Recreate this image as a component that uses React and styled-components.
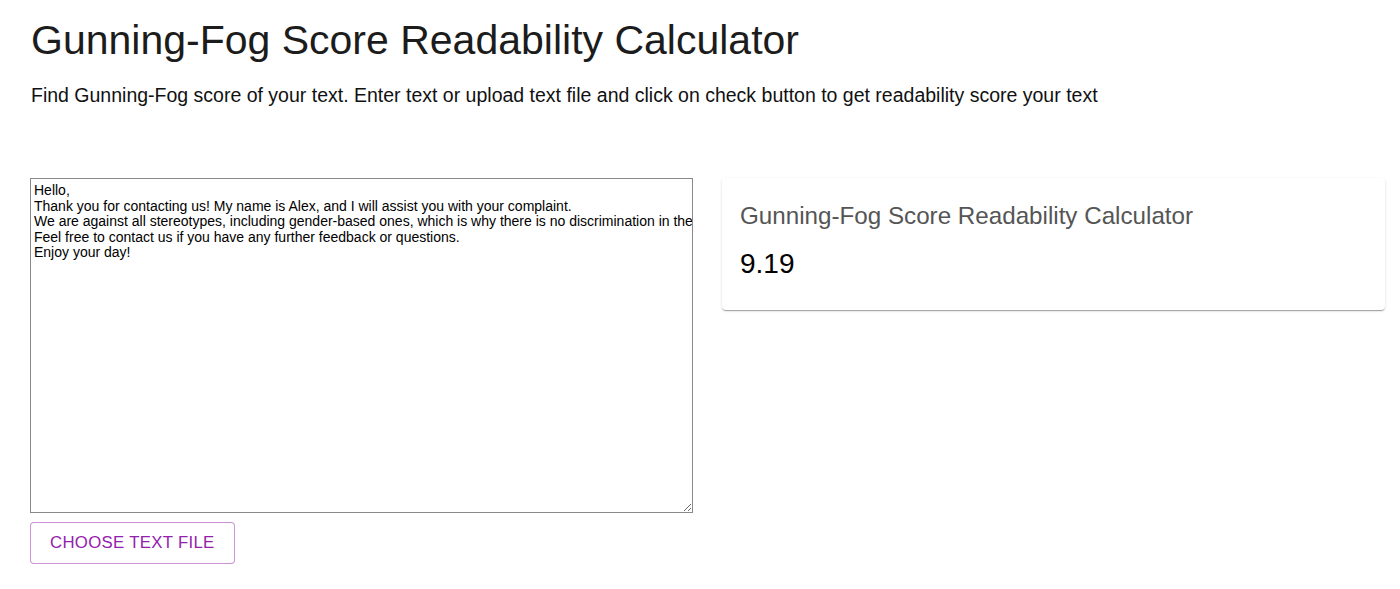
import React from "react";
import styled, { createGlobalStyle } from "styled-components";

const Global = createGlobalStyle`
  html, body { margin: 0; padding: 0; background: #fff; }
  body { font-family: "Liberation Sans", Arial, Helvetica, sans-serif; color: #1a1a1a; }
`;

const Page = styled.div`
  padding: 14px 15px 0 30px;
`;

const Title = styled.h1`
  margin: 0;
  font-size: 41px;
  font-weight: 400;
  line-height: 52px;
  color: #1c1c1c;
  padding-left: 1px;
`;

const Subtitle = styled.p`
  margin: 17px 0 0;
  font-size: 19.5px;
  line-height: 24px;
  color: #111;
  padding-left: 1px;
`;

const Grid = styled.div`
  display: grid;
  grid-template-columns: 1fr 1fr;
  column-gap: 29px;
  margin-top: 71px;
  align-items: start;
`;

const Column = styled.div`
  display: flex;
  flex-direction: column;
  align-items: flex-start;
  gap: 9px;
`;

const TextArea = styled.textarea`
  box-sizing: border-box;
  width: 100%;
  height: 335px;
  margin: 0;
  padding: 4px 3px 2px;
  border: 1px solid #8a8a8a;
  font-family: "Liberation Sans", Arial, sans-serif;
  font-size: 14px;
  line-height: 15.5px;
  color: #000;
  white-space: pre;
  overflow: hidden;
  resize: both;
`;

const OutlinedButton = styled.button`
  box-sizing: border-box;
  height: 42px;
  padding: 0 19px;
  border: 1px solid rgba(156, 39, 176, 0.5);
  border-radius: 4px;
  background: #fff;
  color: #9420ad;
  font-family: "Liberation Sans", Arial, sans-serif;
  font-size: 16.8px;
  letter-spacing: 0.3px;
  text-transform: uppercase;
  cursor: pointer;
`;

const Card = styled.div`
  box-sizing: border-box;
  height: 132px;
  padding: 22px 18px;
  border-radius: 4px;
  background: #fff;
  box-shadow: 0 2px 1px -1px rgba(0, 0, 0, 0.2), 0 1px 1px 0 rgba(0, 0, 0, 0.14),
    0 1px 3px 0 rgba(0, 0, 0, 0.12);
`;

const CardTitle = styled.div`
  font-size: 24.2px;
  line-height: 32px;
  color: #555;
`;

const Score = styled.div`
  margin-top: 16px;
  font-size: 28px;
  line-height: 32px;
  color: #000;
`;

const sample = `Hello,
Thank you for contacting us! My name is Alex, and I will assist you with your complaint.
We are against all stereotypes, including gender-based ones, which is why there is no discrimination in the company.
Feel free to contact us if you have any further feedback or questions.
Enjoy your day!`;

export default function App() {
  return (
    <>
      <Global />
      <Page>
        <Title>Gunning-Fog Score Readability Calculator</Title>
        <Subtitle>
          Find Gunning-Fog score of your text. Enter text or upload text file and click on check button to get readability score your text
        </Subtitle>
        <Grid>
          <Column>
            <TextArea defaultValue={sample} spellCheck={false} />
            <OutlinedButton>Choose text file</OutlinedButton>
          </Column>
          <Card>
            <CardTitle>Gunning-Fog Score Readability Calculator</CardTitle>
            <Score>9.19</Score>
          </Card>
        </Grid>
      </Page>
    </>
  );
}
